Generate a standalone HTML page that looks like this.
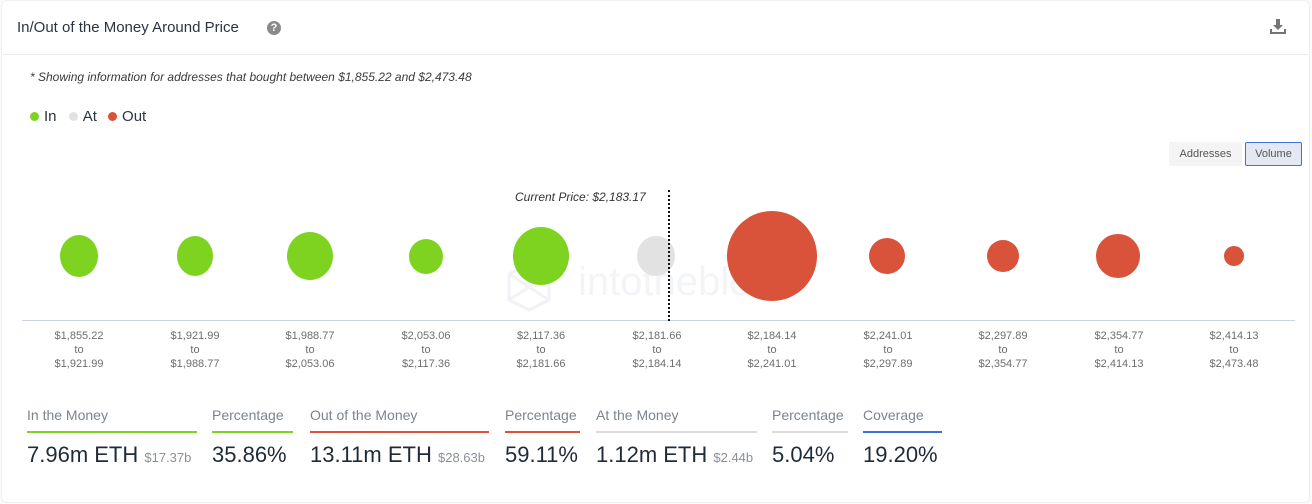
<!DOCTYPE html>
<html><head><meta charset="utf-8"><style>
*{margin:0;padding:0;box-sizing:border-box}
body{width:1312px;height:504px;background:#fafafa;font-family:"Liberation Sans",sans-serif;position:relative;overflow:hidden}
.card{position:absolute;left:1px;top:0;width:1309px;height:503px;background:#fff;border:1px solid #f0f0f0;border-radius:6px}
.a{position:absolute}
.t{font-size:15px;color:#2b3440}
.b{position:absolute;border-radius:50%}
.g{background:#7ed321}.r{background:#d9523a}.w{background:#e2e2e2}
.lab{position:absolute;top:329px;width:100px;text-align:center;font-size:11px;line-height:14px;color:#6e6e6e}
.sl{position:absolute;top:407px;font-size:14px;color:#7b848e;padding-bottom:7px}
.sl i{position:absolute;left:0;right:0;bottom:-3px;height:2px;display:block}
.sv{position:absolute;top:442px;font-size:22px;color:#1f2b38;white-space:nowrap}
.sv small{font-size:13px;color:#8a9098}
</style></head><body>
<div class="card"></div>
<div class="a t" style="left:17px;top:19px">In/Out of the Money Around Price</div>
<div class="a" style="left:267px;top:21px;width:14px;height:14px;border-radius:50%;background:#8a8a8a;color:#fff;font-size:11px;font-weight:bold;text-align:center;line-height:14px">?</div>
<svg class="a" style="left:1269px;top:18px" width="18" height="18" viewBox="0 0 18 18"><path d="M7 1h4v6h3l-5 5-5-5h3z" fill="#757575"/><path d="M1 11h2v3h12v-3h2v5H1z" fill="#757575"/></svg>
<div class="a" style="left:3px;right:4px;top:54px;height:1px;background:#ebebeb"></div>
<div class="a" style="left:30px;top:70px;font-size:12px;font-style:italic;color:#3a3a3a">* Showing information for addresses that bought between $1,855.22 and $2,473.48</div>
<div class="a" style="left:26px;top:108px;font-size:15px;color:#2b3440;white-space:nowrap">
<span style="display:inline-block;width:9px;height:9px;border-radius:50%;background:#7ed321;margin:0 5px 0 4px"></span>In
<span style="display:inline-block;width:9px;height:9px;border-radius:50%;background:#e2e2e2;margin:0 5px 0 8px"></span>At
<span style="display:inline-block;width:9px;height:9px;border-radius:50%;background:#d9523a;margin:0 5px 0 7px"></span>Out</div>
<div class="a" style="left:1169px;top:142px;width:73px;height:24px;background:#f4f4f4;font-size:11px;color:#555;text-align:center;line-height:24px">Addresses</div>
<div class="a" style="left:1245px;top:142px;width:57px;height:24px;background:#e3e8f2;border:1px solid #3b73d6;border-radius:2px;font-size:11px;color:#555;text-align:center;line-height:22px">Volume</div>
<div class="a" style="left:515px;top:190px;font-size:12px;font-style:italic;color:#333">Current Price: $2,183.17</div>
<svg class="a" style="left:507px;top:262px" width="44" height="50" viewBox="0 0 44 50"><path d="M2 12L22 2l20 10v26L22 48 2 38z M2 12l40 26 M42 12L2 38" fill="none" stroke="#f1f2f6" stroke-width="3"/></svg>
<div class="a" style="left:578px;top:260px;font-size:40px;color:#f3f4f8">intotheblock</div>
<div class="a" style="left:22px;top:320px;width:1273px;height:1px;background:#ccd3e0"></div>
<div class="b g" style="left:60px;top:235px;width:38px;height:42px"></div>
<div class="b g" style="left:177px;top:236px;width:36px;height:40px"></div>
<div class="b g" style="left:287px;top:232px;width:46px;height:48px"></div>
<div class="b g" style="left:409px;top:239px;width:34px;height:35px"></div>
<div class="b g" style="left:513px;top:227px;width:56px;height:58px"></div>
<div class="b w" style="left:637px;top:236px;width:38px;height:40px"></div>
<div class="a" style="left:668px;top:190px;width:0;height:131px;border-left:2px dotted #111"></div>
<div class="b r" style="left:727px;top:211px;width:90px;height:90px"></div>
<div class="b r" style="left:869px;top:238px;width:36px;height:36px"></div>
<div class="b r" style="left:987px;top:240px;width:32px;height:32px"></div>
<div class="b r" style="left:1096px;top:234px;width:44px;height:44px"></div>
<div class="b r" style="left:1224px;top:246px;width:20px;height:20px"></div>
<div class="lab" style="left:29px">$1,855.22<br>to<br>$1,921.99</div>
<div class="lab" style="left:145px">$1,921.99<br>to<br>$1,988.77</div>
<div class="lab" style="left:260px">$1,988.77<br>to<br>$2,053.06</div>
<div class="lab" style="left:376px">$2,053.06<br>to<br>$2,117.36</div>
<div class="lab" style="left:491px">$2,117.36<br>to<br>$2,181.66</div>
<div class="lab" style="left:607px">$2,181.66<br>to<br>$2,184.14</div>
<div class="lab" style="left:722px">$2,184.14<br>to<br>$2,241.01</div>
<div class="lab" style="left:838px">$2,241.01<br>to<br>$2,297.89</div>
<div class="lab" style="left:953px">$2,297.89<br>to<br>$2,354.77</div>
<div class="lab" style="left:1069px">$2,354.77<br>to<br>$2,414.13</div>
<div class="lab" style="left:1184px">$2,414.13<br>to<br>$2,473.48</div>
<div class="sl" style="left:27px;width:170px">In the Money<i style="background:#7ed321"></i></div>
<div class="sl" style="left:212px;width:81px">Percentage<i style="background:#7ed321"></i></div>
<div class="sl" style="left:310px;width:179px">Out of the Money<i style="background:#d9523a"></i></div>
<div class="sl" style="left:505px;width:75px">Percentage<i style="background:#d9523a"></i></div>
<div class="sl" style="left:596px;width:161px">At the Money<i style="background:#dcdcdc"></i></div>
<div class="sl" style="left:772px;width:76px">Percentage<i style="background:#dcdcdc"></i></div>
<div class="sl" style="left:863px;width:79px">Coverage<i style="background:#3b73d6"></i></div>
<div class="sv" style="left:27px">7.96m ETH <small>$17.37b</small></div>
<div class="sv" style="left:212px">35.86%</div>
<div class="sv" style="left:310px">13.11m ETH <small>$28.63b</small></div>
<div class="sv" style="left:505px">59.11%</div>
<div class="sv" style="left:596px">1.12m ETH <small>$2.44b</small></div>
<div class="sv" style="left:772px">5.04%</div>
<div class="sv" style="left:863px">19.20%</div>
</body></html>
